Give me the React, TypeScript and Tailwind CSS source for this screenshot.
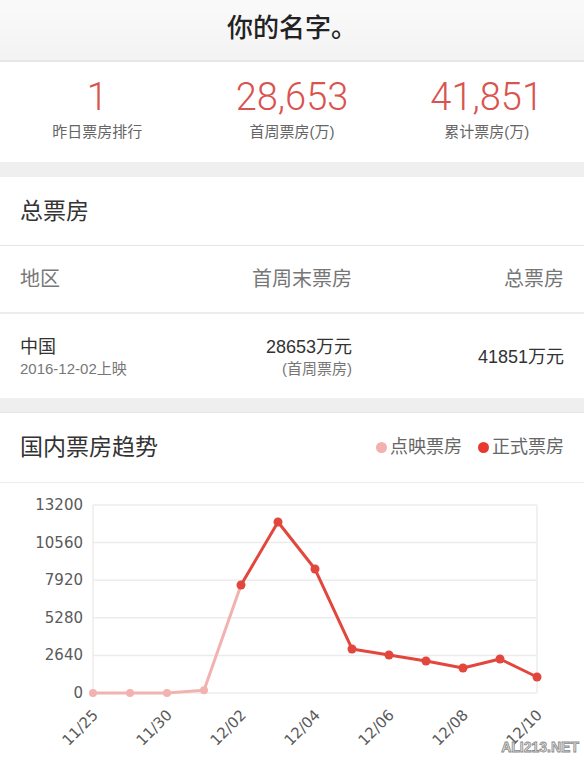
import React from "react";

const cjk = { fontFamily: '"Liberation Sans", "Noto Sans CJK SC", sans-serif' };

// chart geometry, in page pixels (the svg viewBox starts at the chart's top)
const X0 = 93;
const STEP = 37;
const TOP = 505;
const BOTTOM = 693;
const MAX = 13200;

const values = [0, 0, 0, 200, 7583, 12006, 8706, 3090, 2668, 2247, 1755, 2387, 1123];
const ticks = [13200, 10560, 7920, 5280, 2640, 0];
const labels: [number, string][] = [
    [0, "11/25"],
    [2, "11/30"],
    [4, "12/02"],
    [6, "12/04"],
    [8, "12/06"],
    [10, "12/08"],
    [12, "12/10"],
];

const px = (i: number) => X0 + i * STEP;
const py = (v: number) => BOTTOM - (v / MAX) * (BOTTOM - TOP);

function Stat({ value, label }: { value: string, label: string }) {
    return (
        <div className="flex flex-col items-center">
            <div className="text-[38px] leading-[40px] font-light text-[#d9534f]" style={{ fontFamily: "Roboto, sans-serif" }}>
                {value}
            </div>
            <div className="mt-[5px] text-[15px] leading-[20px] text-[#666]">{label}</div>
        </div>
    );
}

function TrendChart() {
    const pre = values.slice(0, 5).map((v, i) => `${px(i)},${py(v)}`).join(" ");
    const main = values.slice(4).map((v, i) => `${px(i + 4)},${py(v)}`).join(" ");
    return (
        <svg width="584" height="278" viewBox="0 483 584 278" className="block" style={{ fontFamily: '"DejaVu Sans", Verdana, sans-serif' }}>
            {ticks.map((t) => (
                <g key={t}>
                    <line x1={X0} x2={X0 + 12 * STEP} y1={py(t)} y2={py(t)} stroke="#ececec" strokeWidth="1.5" />
                    <text x="83" y={py(t) + 5} textAnchor="end" fontSize="15" fill="#5a5a5a">{t}</text>
                </g>
            ))}
            <line x1={X0} x2={X0} y1={TOP} y2={BOTTOM} stroke="#ececec" strokeWidth="1.5" />
            <line x1={X0 + 12 * STEP} x2={X0 + 12 * STEP} y1={TOP} y2={BOTTOM} stroke="#ececec" strokeWidth="1.5" />

            <polyline points={pre} fill="none" stroke="#f2b3b0" strokeWidth="3" strokeLinejoin="round" />
            <polyline points={main} fill="none" stroke="#e2463d" strokeWidth="3" strokeLinejoin="round" />
            {values.map((v, i) => (
                <circle key={i} cx={px(i)} cy={py(v)} r={i < 4 ? 4 : 4.5} fill={i < 4 ? "#f2b3b0" : "#e2463d"} />
            ))}

            {labels.map(([i, s]) => (
                <text key={s} x={px(i) + 6} y={716} textAnchor="end" fontSize="15" fill="#5a5a5a" transform={`rotate(-45 ${px(i) + 6} 716)`}>
                    {s}
                </text>
            ))}

            <text x="579" y="752" textAnchor="end" fontSize="14" fontWeight="bold" fill="#e4e4e4" stroke="#8a8a8a" strokeWidth="0.8" style={{ fontFamily: '"Liberation Sans", sans-serif' }}>
                ALI213.NET
            </text>
        </svg>
    );
}

export default function App() {
    return (
        <div className="w-[584px] h-[761px] overflow-hidden bg-white" style={cjk}>
            <div className="h-[62px] flex items-center justify-center bg-gradient-to-b from-[#fafafa] to-[#f3f3f3] border-b-2 border-[#e6e6e6]">
                <div className="text-[26px] font-medium text-[#222] pb-1">你的名字。</div>
            </div>

            <div className="h-[100px] grid grid-cols-3 pt-[15px]">
                <Stat value="1" label="昨日票房排行" />
                <Stat value="28,653" label="首周票房(万)" />
                <Stat value="41,851" label="累计票房(万)" />
            </div>

            <div className="h-[15px] bg-[#efefef]" />

            <div className="h-[69px] flex items-center px-5 border-b border-[#e5e5e5]">
                <div className="text-[23px] text-[#333]">总票房</div>
            </div>

            <div className="h-[68px] flex items-center px-5 text-[20px] text-[#777] border-b-2 border-[#ececec]">
                <div className="flex-1">地区</div>
                <div className="w-[131px] text-right">首周末票房</div>
                <div className="w-[212px] text-right">总票房</div>
            </div>

            <div className="h-[84px] flex items-center px-5 pt-[2px]">
                <div className="flex-1 flex flex-col">
                    <div className="text-[18px] leading-[24px] text-[#333]">中国</div>
                    <div className="text-[15px] leading-[20px] text-[#777]">2016-12-02上映</div>
                </div>
                <div className="w-[160px] flex flex-col items-end">
                    <div className="text-[18px] leading-[24px] text-[#333]">28653万元</div>
                    <div className="text-[15px] leading-[20px] text-[#777]">(首周票房)</div>
                </div>
                <div className="w-[212px] text-right text-[18px] text-[#333]">41851万元</div>
            </div>

            <div className="h-[15px] bg-[#efefef] border-b border-[#e6e6e6]" />

            <div className="h-[70px] flex items-center px-5 border-b border-[#ececec]">
                <div className="flex-1 text-[23px] text-[#333]">国内票房趋势</div>
                <div className="flex items-center text-[18px] text-[#666]">
                    <span className="w-[11px] h-[11px] rounded-full bg-[#f4b0ad] mr-[3px]" />
                    <span>点映票房</span>
                    <span className="w-[11px] h-[11px] rounded-full bg-[#e8392f] ml-[16px] mr-[3px]" />
                    <span>正式票房</span>
                </div>
            </div>

            <TrendChart />
        </div>
    );
}
